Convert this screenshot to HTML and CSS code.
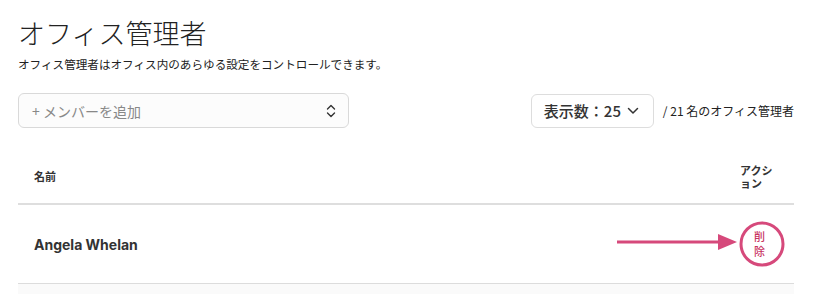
FILE: index.html
```html
<!DOCTYPE html>
<html lang="ja">
<head>
<meta charset="utf-8">
<link rel="stylesheet" href="styles.css">
</head>
<body>
<div class="page">
  <h1 class="title">オフィス管理者</h1>
  <p class="desc">オフィス管理者はオフィス内のあらゆる設定をコントロールできます。</p>
  <div class="toolbar">
    <div class="member-select">
      <span class="placeholder">+ メンバーを追加</span>
      <svg class="updown" width="10" height="14" viewBox="0 0 10 14"><path d="M1.5 5 L5 1.5 L8.5 5 M1.5 9 L5 12.5 L8.5 9" fill="none" stroke="#333" stroke-width="1.4" stroke-linecap="round" stroke-linejoin="round"/></svg>
    </div>
    <div class="right-tools">
      <div class="per-page">
        <span>表示数：25</span>
        <svg width="12" height="8" viewBox="0 0 12 8"><path d="M1.5 1.5 L6 6 L10.5 1.5" fill="none" stroke="#333" stroke-width="1.5" stroke-linecap="round" stroke-linejoin="round"/></svg>
      </div>
      <span class="count">/ 21 名のオフィス管理者</span>
    </div>
  </div>
  <div class="table">
    <div class="thead">
      <div class="th name-col">名前</div>
      <div class="th action-col">アクション</div>
    </div>
    <div class="row">
      <div class="td name-cell">Angela Whelan</div>
      <div class="td action-cell"><span class="delete">削除</span></div>
      <svg class="annot" width="190" height="60" viewBox="0 0 190 60">
        <line x1="0" y1="28" x2="105" y2="28" stroke="#d6497b" stroke-width="3"/>
        <polygon points="101,20 120,28 101,36" fill="#d6497b"/>
        <circle cx="145" cy="30" r="21" fill="none" stroke="#d6497b" stroke-width="3"/>
      </svg>
    </div>
    <div class="row-next"></div>
  </div>
</div>
</body>
</html>
```
FILE: styles.css
```css
* { box-sizing: border-box; }
html, body { margin: 0; padding: 0; background: #fff; }
body {
  font-family: "Noto Sans CJK JP", "Noto Sans", sans-serif;
  color: #333;
}
.page { padding: 14px 19px 0 18px; }
.title {
  margin: 0;
  font-size: 27px;
  font-weight: 300;
  line-height: 38px;
  color: #222;
}
.desc {
  margin: 4px 0 0;
  font-size: 11.6px;
  line-height: 16px;
  color: #222;
}
.toolbar {
  margin-top: 21px;
  display: flex;
  justify-content: space-between;
  align-items: center;
}
.member-select {
  width: 331px;
  height: 35px;
  border: 1px solid #d9d9d9;
  border-radius: 6px;
  background: #fcfcfc;
  display: flex;
  align-items: center;
  justify-content: space-between;
  padding: 0 12px 0 13px;
}
.placeholder {
  font-size: 14px;
  color: #888;
}
.right-tools { display: flex; align-items: center; gap: 9px; }
.per-page {
  height: 34px;
  width: 123px;
  border: 1px solid #ddd;
  border-radius: 6px;
  display: flex;
  align-items: center;
  padding: 0 14px 0 12px;
  justify-content: space-between;
  font-size: 15px;
  font-weight: 500;
  color: #333;
}
.count { font-size: 12px; color: #222; }
.table { margin-top: 22px; }
.thead {
  display: flex;
  justify-content: space-between;
  align-items: center;
  height: 55px;
  border-bottom: 2px solid #dedede;
  padding: 0 0 0 16px;
}
.th { font-size: 11px; font-weight: 700; color: #333; line-height: 13px; }
.action-col { width: 54px; padding-right: 17px; }
.row {
  position: relative;
  display: flex;
  justify-content: space-between;
  align-items: center;
  height: 79px;
  border-bottom: 1px solid #dcdcdc;
  padding: 0 0 0 16px;
}
.name-cell { font-family: "Inter", "Noto Sans", sans-serif; font-size: 14px; font-weight: 700; color: #333; }
.action-cell { width: 54px; padding-left: 14px; }
.delete {
  display: block;
  width: 12px;
  font-size: 11px;
  font-weight: 500;
  line-height: 15px;
  color: #c8335f;
}
.annot { position: absolute; left: 599px; top: 9px; }
.row-next { height: 12px; background: #fafafa; }
```
